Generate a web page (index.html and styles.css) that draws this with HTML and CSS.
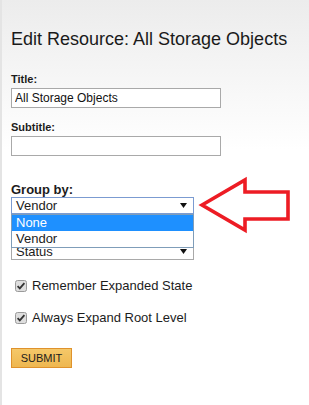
FILE: index.html
```html
<!DOCTYPE html>
<html lang="en">
<head>
    <meta charset="UTF-8">
    <title>Edit Resource</title>
    <link rel="stylesheet" href="styles.css">
</head>
<body>
    <div class="panel">
        <h1>Edit Resource: All Storage Objects</h1>

        <div class="field">
            <label class="field-label">Title:</label>
            <input class="text-input" type="text" value="All Storage Objects">
        </div>

        <div class="field">
            <label class="field-label">Subtitle:</label>
            <input class="text-input" type="text" value="">
        </div>

        <div class="group-by">
            <label class="group-label">Group by:</label>
            <div class="select-wrap">
                <div class="fake-select focused">
                    <span>Vendor</span>
                    <svg class="caret" width="7" height="5" viewBox="0 0 7 5"><polygon points="0,0 7,0 3.5,5" fill="#111"/></svg>
                </div>
                <ul class="option-list">
                    <li class="option selected">None</li>
                    <li class="option">Vendor</li>
                </ul>
            </div>
            <div class="fake-select second">
                <span>Status</span>
                <svg class="caret" width="7" height="5" viewBox="0 0 7 5"><polygon points="0,0 7,0 3.5,5" fill="#111"/></svg>
            </div>
        </div>

        <div class="check-row first">
            <svg class="check" width="12" height="12" viewBox="0 0 12 12">
                <rect x="0.5" y="0.5" width="11" height="11" rx="2" fill="#dedede" stroke="#9a9a9a"/>
                <path d="M2.6 6.2 L4.8 8.4 L9.4 3.2" fill="none" stroke="#333" stroke-width="1.8"/>
            </svg>
            <span>Remember Expanded State</span>
        </div>
        <div class="check-row">
            <svg class="check" width="12" height="12" viewBox="0 0 12 12">
                <rect x="0.5" y="0.5" width="11" height="11" rx="2" fill="#dedede" stroke="#9a9a9a"/>
                <path d="M2.6 6.2 L4.8 8.4 L9.4 3.2" fill="none" stroke="#333" stroke-width="1.8"/>
            </svg>
            <span>Always Expand Root Level</span>
        </div>

        <button class="submit">SUBMIT</button>

        <!-- annotation arrow drawn over the form -->
        <svg class="pointer" width="100" height="66" viewBox="0 0 100 66">
            <polygon points="6,33 49,8 49,20 92,20 92,47 49,47 49,58" fill="none" stroke="#ed1c24" stroke-width="3.6"/>
        </svg>
    </div>
</body>
</html>
```

FILE: styles.css
```css
* {
    box-sizing: border-box;
}

body {
    margin: 0;
    font-family: "Liberation Sans", Arial, sans-serif;
    color: #1c1c1c;
}

.panel {
    position: relative;
    min-height: 100vh;
    padding: 29px 0 0 9px;
    border-left: 2px solid #e4e4e4;
    background: linear-gradient(#ececec, #ffffff 150px);
}

h1 {
    margin: 0;
    font-size: 18px;
    line-height: 21px;
    font-weight: normal;
    color: #1a1a1a;
}

.field {
    display: flex;
    flex-direction: column;
    align-items: flex-start;
    margin-top: 23px;
}

.field + .field {
    margin-top: 13px;
}

.field-label {
    font-size: 11px;
    line-height: 13px;
    font-weight: bold;
    margin-bottom: 2px;
}

.text-input {
    width: 210px;
    height: 20px;
    margin: 0;
    padding: 0 3px;
    border: 1px solid #a9a9a9;
    background: #fff;
    font-family: "Liberation Sans", Arial, sans-serif;
    font-size: 12px;
    color: #111;
    outline: none;
}

.group-by {
    margin-top: 26px;
}

.group-label {
    display: block;
    font-size: 13px;
    line-height: 15px;
    font-weight: bold;
}

.select-wrap {
    position: relative;
}

.fake-select {
    width: 183px;
    height: 17px;
    display: flex;
    justify-content: space-between;
    align-items: center;
    padding: 0 6px 0 4px;
    border: 1px solid #a9a9a9;
    background: #fff;
    font-size: 13px;
    line-height: 15px;
}

.fake-select.focused {
    border-color: #7b9bd1;
}

.fake-select.second {
    margin-top: 29px;
}

.option-list {
    position: absolute;
    top: 17px;
    left: 0;
    width: 183px;
    margin: 0;
    padding: 0;
    list-style: none;
    border: 1px solid #7f9db9;
    background: #fff;
    z-index: 2;
}

.option {
    height: 16px;
    padding-left: 4px;
    font-size: 13px;
    line-height: 16px;
}

.option.selected {
    background: #1e90ff;
    color: #fff;
}

.check-row {
    display: flex;
    align-items: center;
    gap: 5px;
    margin-top: 17px;
    padding-left: 4px;
    font-size: 13px;
    line-height: 15px;
}

.check-row.first {
    margin-top: 18px;
}

.submit {
    display: block;
    margin-top: 23px;
    width: 61px;
    height: 20px;
    padding: 0;
    border: 1px solid #df922c;
    background: linear-gradient(#f5c869, #eeb750);
    font-family: "Liberation Sans", Arial, sans-serif;
    font-size: 11px;
    color: #1c1c1c;
}

.pointer {
    position: absolute;
    left: 194px;
    top: 172px;
}
```
